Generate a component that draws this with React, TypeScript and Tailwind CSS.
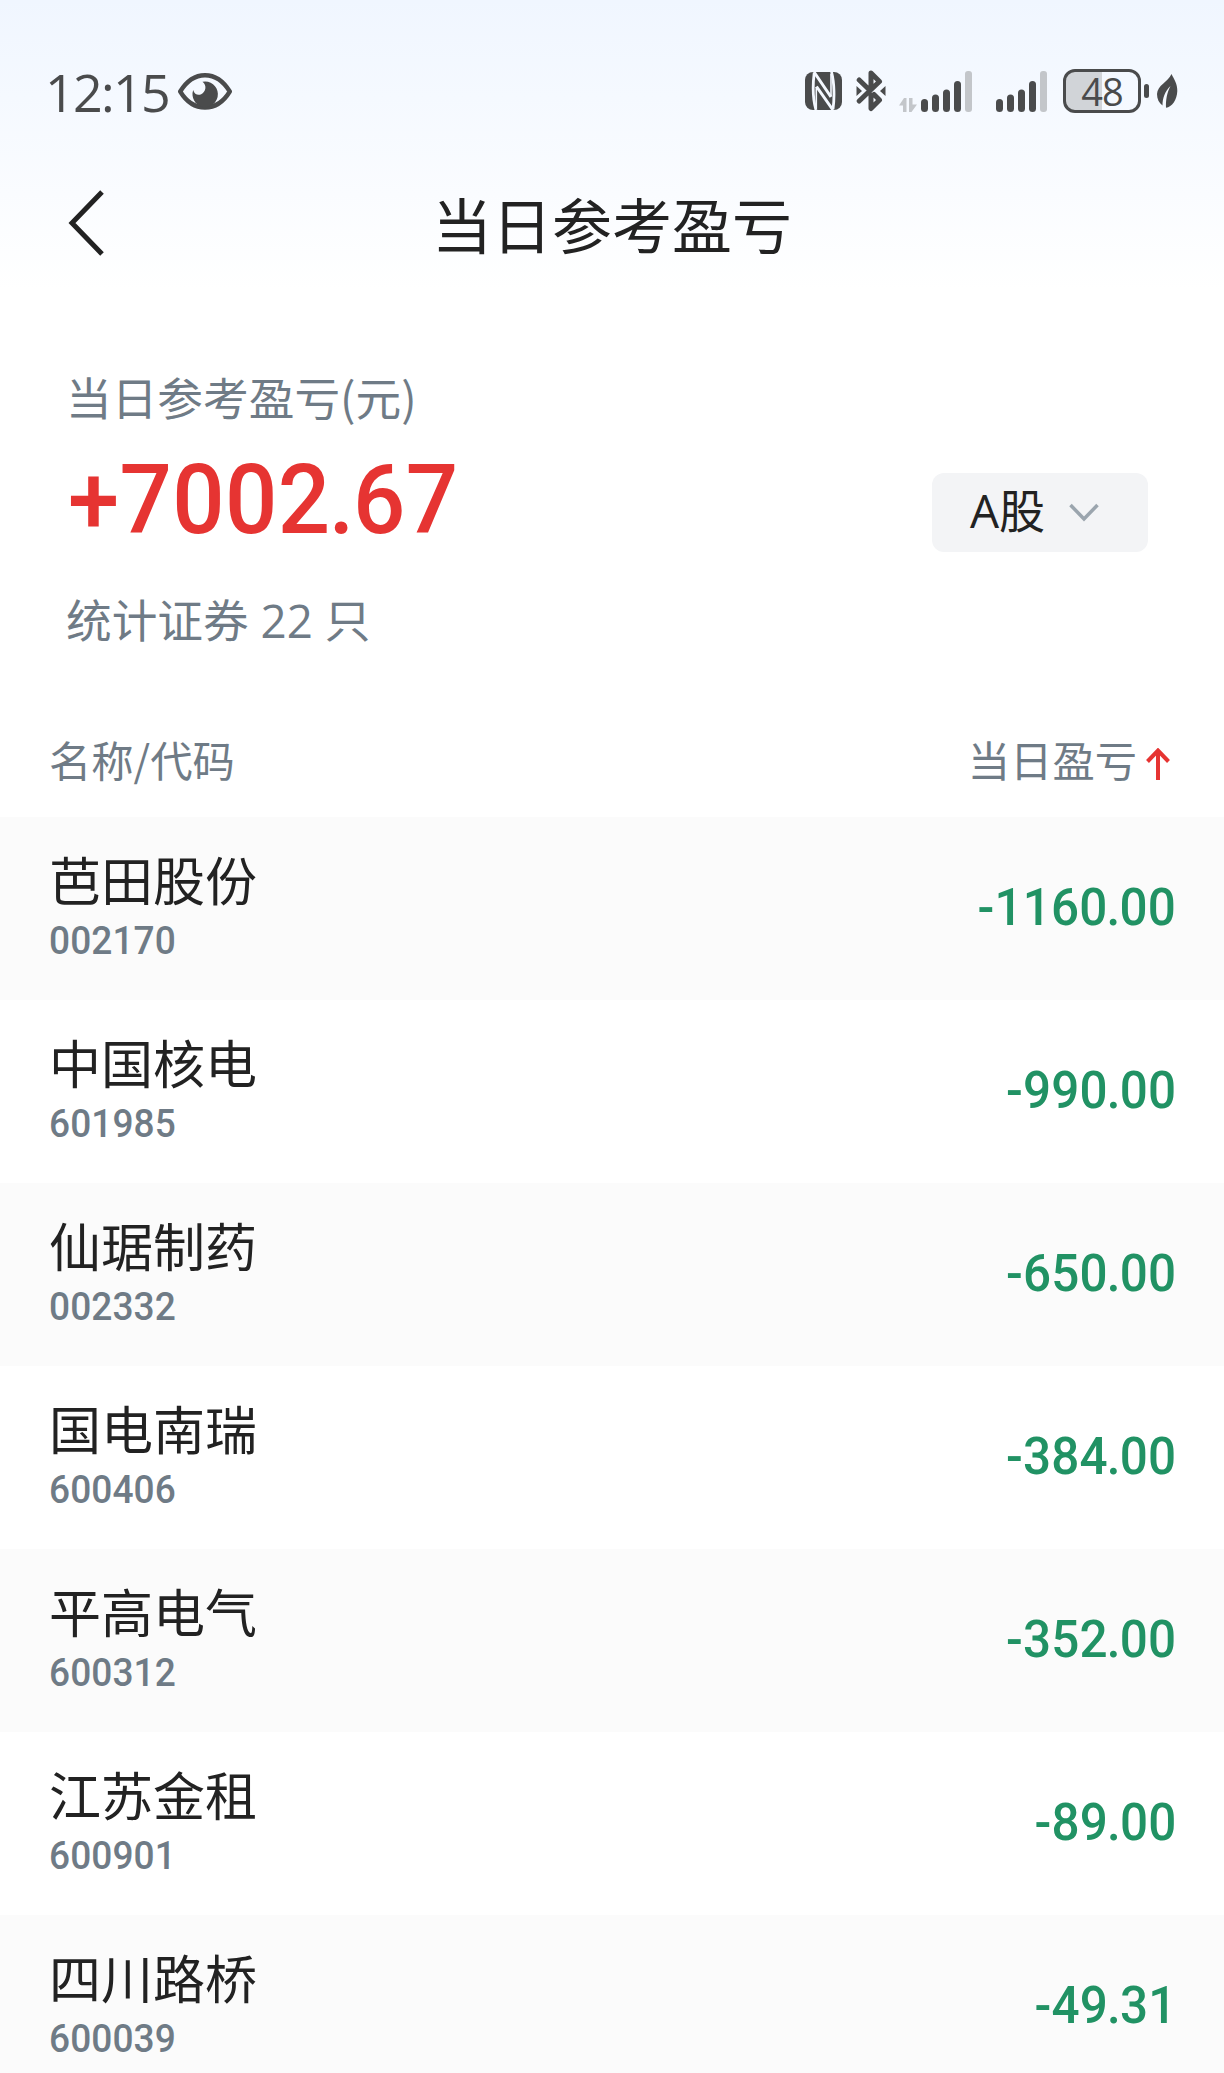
import React from 'react';

interface Holding {
  name: string;
  code: string;
  profit: string;
}

const holdings: Holding[] = [
  { name: '芭田股份', code: '002170', profit: '-1160.00' },
  { name: '中国核电', code: '601985', profit: '-990.00' },
  { name: '仙琚制药', code: '002332', profit: '-650.00' },
  { name: '国电南瑞', code: '600406', profit: '-384.00' },
  { name: '平高电气', code: '600312', profit: '-352.00' },
  { name: '江苏金租', code: '600901', profit: '-89.00' },
  { name: '四川路桥', code: '600039', profit: '-49.31' },
];

const EyeIcon = () => (
  <svg className="w-[54px] h-[37px]" viewBox="0 0 54 37" fill="none">
    <path d="M2.2 18.5C8 9 16.5 2.2 27 2.2S46 9 51.8 18.5C46 28 37.5 34.5 27 34.5S8 28 2.2 18.5Z" stroke="#4a4b4c" strokeWidth="4.4" strokeLinejoin="round" />
    <path d="M24.5 8.8A12.7 12.7 0 1 1 15.2 17C16.5 21.5 20 22.8 23.2 21.2C27.8 19 29.3 12.5 24.5 8.8Z" fill="#4a4b4c" />
    <path d="M17 29L27 36L37 29Z" fill="#4a4b4c" />
  </svg>
);

const NfcIcon = () => (
  <svg className="w-[37px] h-[38px]" viewBox="0 0 37 38" fill="none">
    <rect width="37" height="38" rx="8" fill="#4a4b4c" />
    <path d="M9.2 1C7.8 12 7.8 27 11 38M28 37C29.5 27 29.5 11 26.5 0" stroke="#f4f8ff" strokeWidth="2.8" />
    <path d="M9 0L26 25M11.5 14.5L28 38" stroke="#f4f8ff" strokeWidth="3" />
    <path d="M11.3 15V36M26 2V24" stroke="#f4f8ff" strokeWidth="1.6" />
  </svg>
);

const BluetoothIcon = () => (
  <svg className="w-[30px] h-[42px]" viewBox="0 0 30 42" fill="none">
    <path d="M15 16V3L23.5 11.5L3.2 31M3.2 10L12 18.5M18 24.5L23.5 30L15 38.5V25" stroke="#4a4b4c" strokeWidth="5" strokeLinecap="round" strokeLinejoin="round" />
    <path d="M0.5 16L6 21L0.5 26ZM29.5 16L24 21L29.5 26Z" fill="#4a4b4c" />
  </svg>
);

const SignalIcon = () => (
  <svg className="w-[51px] h-[41px]" viewBox="0 0 51 41">
    <rect x="0" y="28" width="7" height="13" rx="3.5" fill="#4a4b4c" />
    <rect x="11" y="23.5" width="7" height="17.5" rx="3.5" fill="#4a4b4c" />
    <rect x="22" y="18.5" width="7" height="22.5" rx="3.5" fill="#4a4b4c" />
    <rect x="33" y="10" width="7" height="31" rx="3.5" fill="#4a4b4c" />
    <rect x="44" y="0" width="7" height="41" rx="3" fill="#c3c6ca" />
  </svg>
);

const DataArrowsIcon = () => (
  <svg className="w-[18px] h-[14px]" viewBox="0 0 18 14" fill="#c3c6ca">
    <path d="M7.5 0V14H4V7.5H0L5 0ZM10 14V0H13.5V6.5H18L12.5 14Z" />
  </svg>
);

const LeafIcon = () => (
  <svg className="w-[21px] h-[34px]" viewBox="0 0 21 34">
    <path d="M14.5 0C17 5 20.5 10 20.3 17C20 26 15 33 9 33.8C8.5 27 10 18 13.5 12C8 17.5 5.5 24 5.5 31.5C2 29 0 25 0 20C0.5 11 11 8 14.5 0Z" fill="#4a4b4c" />
  </svg>
);

// Condensed digits with a tight decimal point
const Amount: React.FC<{ value: string }> = ({ value }) => {
  const [whole, decimals] = value.split('.');
  return (
    <>
      {whole}
      <span className="-mx-[0.02em]">.</span>
      {decimals}
    </>
  );
};

const StatusBar: React.FC = () => (
  <div className="h-[180px] pt-0.5 pl-[45px] pr-[46px] flex items-center justify-between text-[#4a4b4c] font-['Open_Sans',sans-serif]">
    <div className="flex items-center">
      <span className="pt-0.5 text-[52px] leading-[60px] w-[133px] tracking-[-1.7px] whitespace-nowrap">12:15</span>
      <EyeIcon />
    </div>
    <div className="flex items-center">
      <NfcIcon />
      <div className="ml-[14px]"><BluetoothIcon /></div>
      <div className="ml-[13px] flex items-end">
        <DataArrowsIcon />
        <div className="ml-1"><SignalIcon /></div>
        <div className="ml-6"><SignalIcon /></div>
      </div>
      <div className="ml-4 w-[78px] h-11 rounded-[12px] border-[3.5px] border-[#4a4b4c] bg-linear-to-r from-[#d1d4d8] from-50% to-transparent to-50% flex items-center justify-center">
        <span className="text-[38px] leading-[38px] tracking-[-1px]">48</span>
      </div>
      <div className="ml-[3px] w-[5px] h-[14px] rounded-full bg-[#4a4b4c]" />
      <div className="ml-2"><LeafIcon /></div>
    </div>
  </div>
);

const TitleBar: React.FC = () => (
  <header className="h-[86px] px-[68px] flex items-center justify-between text-[#222]">
    <svg className="w-9 h-[66px]" viewBox="0 0 36 66" fill="none">
      <path d="M34 2L4 33L34 64" stroke="#222" strokeWidth="5" />
    </svg>
    <h1 className="text-[60px] leading-[80px]">当日参考盈亏</h1>
    <div className="w-9" />
  </header>
);

const Summary: React.FC = () => (
  <section className="h-[436px] pt-[100px] pl-[66px] pr-[76px] flex justify-between text-[#6f7b86]">
    <div>
      <p className="text-[45.7px] leading-[60px]">当日参考盈亏(元)</p>
      <p className="mt-[24px] ml-0.5 origin-left scale-x-95 font-[Roboto] font-medium text-[97px] leading-[100px] tracking-[0.4px] text-[#e63432]">
        <Amount value="+7002.67" />
      </p>
      <p className="mt-[38px] text-[45.7px] leading-[60px]">
        统计证券<span className="font-['Open_Sans']"> 22 </span>只
      </p>
    </div>
    <button className="mt-[107px] w-[216px] h-[79px] pl-[38px] rounded-xl bg-[#f3f4f6] flex items-center text-[46px] leading-[60px] text-[#222]">
      <span className="-mt-2"><span className="font-['Open_Sans']">A</span>股</span>
      <svg className="ml-6 w-[30px] h-5" viewBox="0 0 30 20" fill="none">
        <path d="M1.5 2L15 16L28.5 2" stroke="#9ba5ae" strokeWidth="3.5" />
      </svg>
    </button>
  </section>
);

const HoldingRow: React.FC<{ item: Holding }> = ({ item }) => (
  <li className="h-[183px] pl-[49px] pr-12 flex justify-between even:bg-white odd:bg-[#fbfbfb]">
    <div className="pt-8">
      <p className="text-[52px] leading-[60px] text-[#222]">{item.name}</p>
      <p className="mt-[9px] origin-left scale-x-95 font-[Roboto] font-medium text-[39px] leading-[46px] tracking-[0.1px] text-[#6f7b86]">{item.code}</p>
    </div>
    <span className="pt-[61px] origin-right scale-x-95 font-[Roboto] font-medium text-[52px] leading-[60px] tracking-[0.2px] text-[#219264]">
      <Amount value={item.profit} />
    </span>
  </li>
);

export default function App() {
  return (
    <div className="w-full h-[2073px] overflow-hidden bg-white bg-linear-to-b from-[#f0f6ff] to-white to-[290px] font-['Noto_Sans_CJK_SC',sans-serif]">
      <StatusBar />
      <TitleBar />
      <Summary />
      <div className="h-[115px] pt-[27px] pl-[49px] pr-[54px] flex justify-between text-[42.3px] leading-[60px] text-[#6f7b86]">
        <span>名称/代码</span>
        <div className="flex">
          <span>当日盈亏</span>
          <svg className="mt-[19px] ml-[9px] w-6 h-8" viewBox="0 0 24 32" fill="none">
            <path d="M12 32V3M1.5 13.5L12 2.5L22.5 13.5" stroke="#e63432" strokeWidth="4" />
          </svg>
        </div>
      </div>
      <ul>
        {holdings.map((item) => (
          <HoldingRow key={item.code} item={item} />
        ))}
      </ul>
    </div>
  );
}
